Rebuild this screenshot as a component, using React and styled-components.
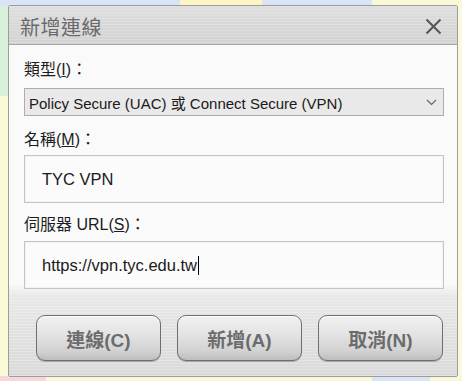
import React from "react";
import styled, { createGlobalStyle } from "styled-components";

const GlobalStyle = createGlobalStyle`
  html, body {
    margin: 0;
    padding: 0;
  }
  body {
    width: 462px;
    height: 381px;
    overflow: hidden;
    background:
      linear-gradient(to right, #d9e5f6 0 180px, #fdf6c4 180px 262px, #d9e5f6 262px 372px, #fbf8d6 372px) top / 100% 6px no-repeat,
      linear-gradient(to right, #f7d6dc 0 46px, #fbf8d6 46px 372px, #d9e5f6 372px 430px, #fbf8d6 430px) bottom / 100% 5px no-repeat,
      linear-gradient(#d8efd8 0 96px, #fcf9d6 96px) left / 8px 100% no-repeat,
      #fbf8de;
    font-family: "Liberation Sans", "Noto Sans CJK TC", sans-serif;
  }
`;

const Desktop = styled.div`
  padding: 5px 0 0 8px;
`;

const Dialog = styled.div`
  width: 450px;
  height: 372px;
  box-sizing: border-box;
  border: 1px solid #9c9c9c;
  border-radius: 2px;
  display: flex;
  flex-direction: column;
  background: #fafafa;
`;

const TitleBar = styled.div`
  height: 39px;
  box-sizing: border-box;
  display: flex;
  align-items: center;
  justify-content: space-between;
  padding: 2px 15px 0 11px;
  background:
    repeating-linear-gradient(to bottom, rgba(255, 255, 255, 0.18) 0 1px, transparent 1px 3px),
    linear-gradient(#dedede, #d2d2d2);
  border-bottom: 1px solid #a6a6a6;
  box-shadow: 0 1px 0 #e6e6e6;
`;

const Title = styled.span`
  font-family: "Noto Sans CJK TC", sans-serif;
  font-size: 20px;
  color: #6a6a6a;
  letter-spacing: 0.5px;
`;

const CloseButton = styled.div`
  width: 17px;
  height: 17px;
  display: flex;
  color: #555;
`;

const Body = styled.div`
  flex: 1;
  padding: 16px 13px 0 15px;
  background: linear-gradient(#fafafa 0, #fafafa 238px, #ececec 249px);
`;

const Field = styled.div`
  margin-top: ${(p) => p.$top || 0}px;
  display: flex;
  flex-direction: column;
`;

const Label = styled.div`
  font-size: 16px;
  line-height: 18px;
  height: 18px;
  color: #1c1c1c;
  margin-bottom: ${(p) => p.$gap}px;
  white-space: nowrap;
`;

const Key = styled.span`
  text-decoration: underline;
  text-underline-offset: 1px;
`;

const Select = styled.div`
  height: 28px;
  box-sizing: border-box;
  border: 1px solid #adadad;
  background: #e9e9e9;
  display: flex;
  align-items: center;
  justify-content: space-between;
  padding: 0 6px 0 4px;
  font-size: 15px;
  color: #1a1a1a;
  white-space: nowrap;
`;

const Chevron = styled.svg`
  width: 11px;
  height: 7px;
  color: #666;
`;

const TextBox = styled.div`
  height: 48px;
  box-sizing: border-box;
  border: 1px solid #c4c4c4;
  box-shadow: inset 0 0 0 1px #f2f2f2;
  background: #fbfbfb;
  display: flex;
  align-items: center;
  padding: 1px 0 0 17px;
  font-size: 16.5px;
  color: #1a1a1a;
  white-space: nowrap;
`;

const Caret = styled.span`
  display: inline-block;
  width: 1px;
  height: 19px;
  margin-left: 1px;
  background: #000;
`;

const Footer = styled.div`
  height: 82px;
  box-sizing: border-box;
  display: flex;
  gap: 16px;
  padding: 21px 0 0 27px;
  background:
    repeating-linear-gradient(to bottom, rgba(255, 255, 255, 0.25) 0 1px, transparent 1px 3px),
    linear-gradient(#e8e8e8, #d9d9d9);
`;

const Button = styled.div`
  width: 125px;
  height: 46px;
  box-sizing: border-box;
  border: 1px solid #6f6f6f;
  border-radius: 9px;
  display: flex;
  align-items: center;
  justify-content: center;
  background: linear-gradient(#f1f1f1 0%, #e2e2e2 45%, #d2d2d2 80%, #bdbdbd 100%);
  box-shadow: inset 0 1px 0 #fff, 0 1px 0 #a9a9a9;
  font-size: 19px;
  font-weight: bold;
  color: #6c6c6c;
  white-space: nowrap;
`;

export default function App() {
  return (
    <>
      <GlobalStyle />
      <Desktop>
        <Dialog>
          <TitleBar>
            <Title>新增連線</Title>
            <CloseButton>
              <svg width="17" height="17" viewBox="0 0 17 17">
                <path d="M1.5 1.5 L15.5 15.5 M15.5 1.5 L1.5 15.5" stroke="currentColor" strokeWidth="2" fill="none" />
              </svg>
            </CloseButton>
          </TitleBar>
          <Body>
            <Field>
              <Label $gap={9}>
                類型(<Key>I</Key>)：
              </Label>
              <Select>
                <span>Policy Secure (UAC) 或 Connect Secure (VPN)</span>
                <Chevron viewBox="0 0 11 7">
                  <path d="M1 1 L5.5 5.5 L10 1" stroke="currentColor" strokeWidth="1.2" fill="none" />
                </Chevron>
              </Select>
            </Field>
            <Field $top={15}>
              <Label $gap={6}>
                名稱(<Key>M</Key>)：
              </Label>
              <TextBox>TYC VPN</TextBox>
            </Field>
            <Field $top={13}>
              <Label $gap={7}>
                伺服器 URL(<Key>S</Key>)：
              </Label>
              <TextBox>
                https://vpn.tyc.edu.tw
                <Caret />
              </TextBox>
            </Field>
          </Body>
          <Footer>
            <Button>連線(C)</Button>
            <Button>新增(A)</Button>
            <Button>取消(N)</Button>
          </Footer>
        </Dialog>
      </Desktop>
    </>
  );
}
